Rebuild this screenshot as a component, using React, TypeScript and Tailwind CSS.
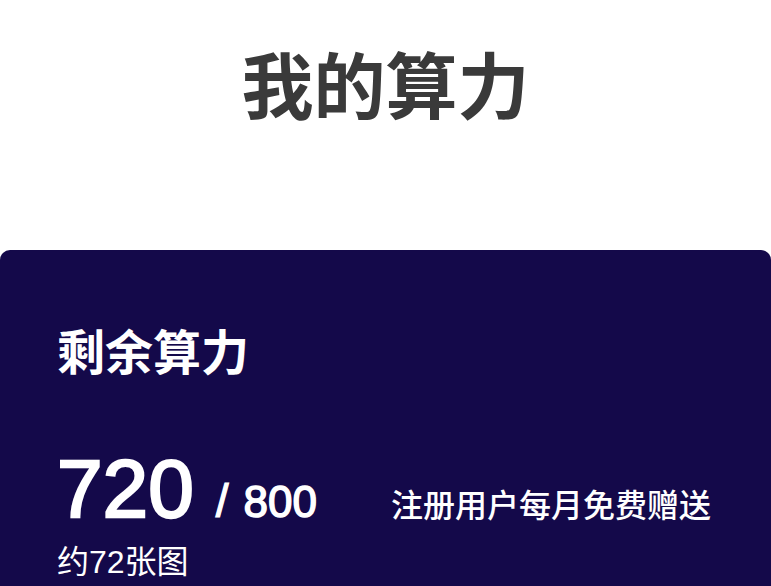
import React from "react";

export default function App() {
  const font = { fontFamily: '"Liberation Sans", "Noto Sans CJK SC", sans-serif' };
  return (
    <div className="w-[771px] h-[586px] overflow-hidden bg-white" style={font}>
      <div className="h-[250px] pt-[38px] flex justify-center">
        <h1 className="text-[72px] leading-[100px] font-bold text-[#3a3a3a]">我的算力</h1>
      </div>
      <div className="bg-[#14094a] rounded-t-[10px] h-[400px] pl-[57px] pt-[72px] text-white">
        <div className="text-[48px] leading-[64px] font-bold">剩余算力</div>
        <div className="mt-[68px] flex items-baseline">
          <span className="text-[82px] leading-[70px] [-webkit-text-stroke:2.4px_#ffffff]">720</span>
          <span className="text-[46px] ml-[22px] [-webkit-text-stroke:1.2px_#ffffff]">/</span>
          <span className="text-[44px] ml-[15px] [-webkit-text-stroke:1.4px_#ffffff]">800</span>
          <span className="text-[32px] ml-[74px] font-medium">注册用户每月免费赠送</span>
        </div>
        <div className="text-[32px] leading-[40px] mt-[6px]">约72张图</div>
      </div>
    </div>
  );
}
